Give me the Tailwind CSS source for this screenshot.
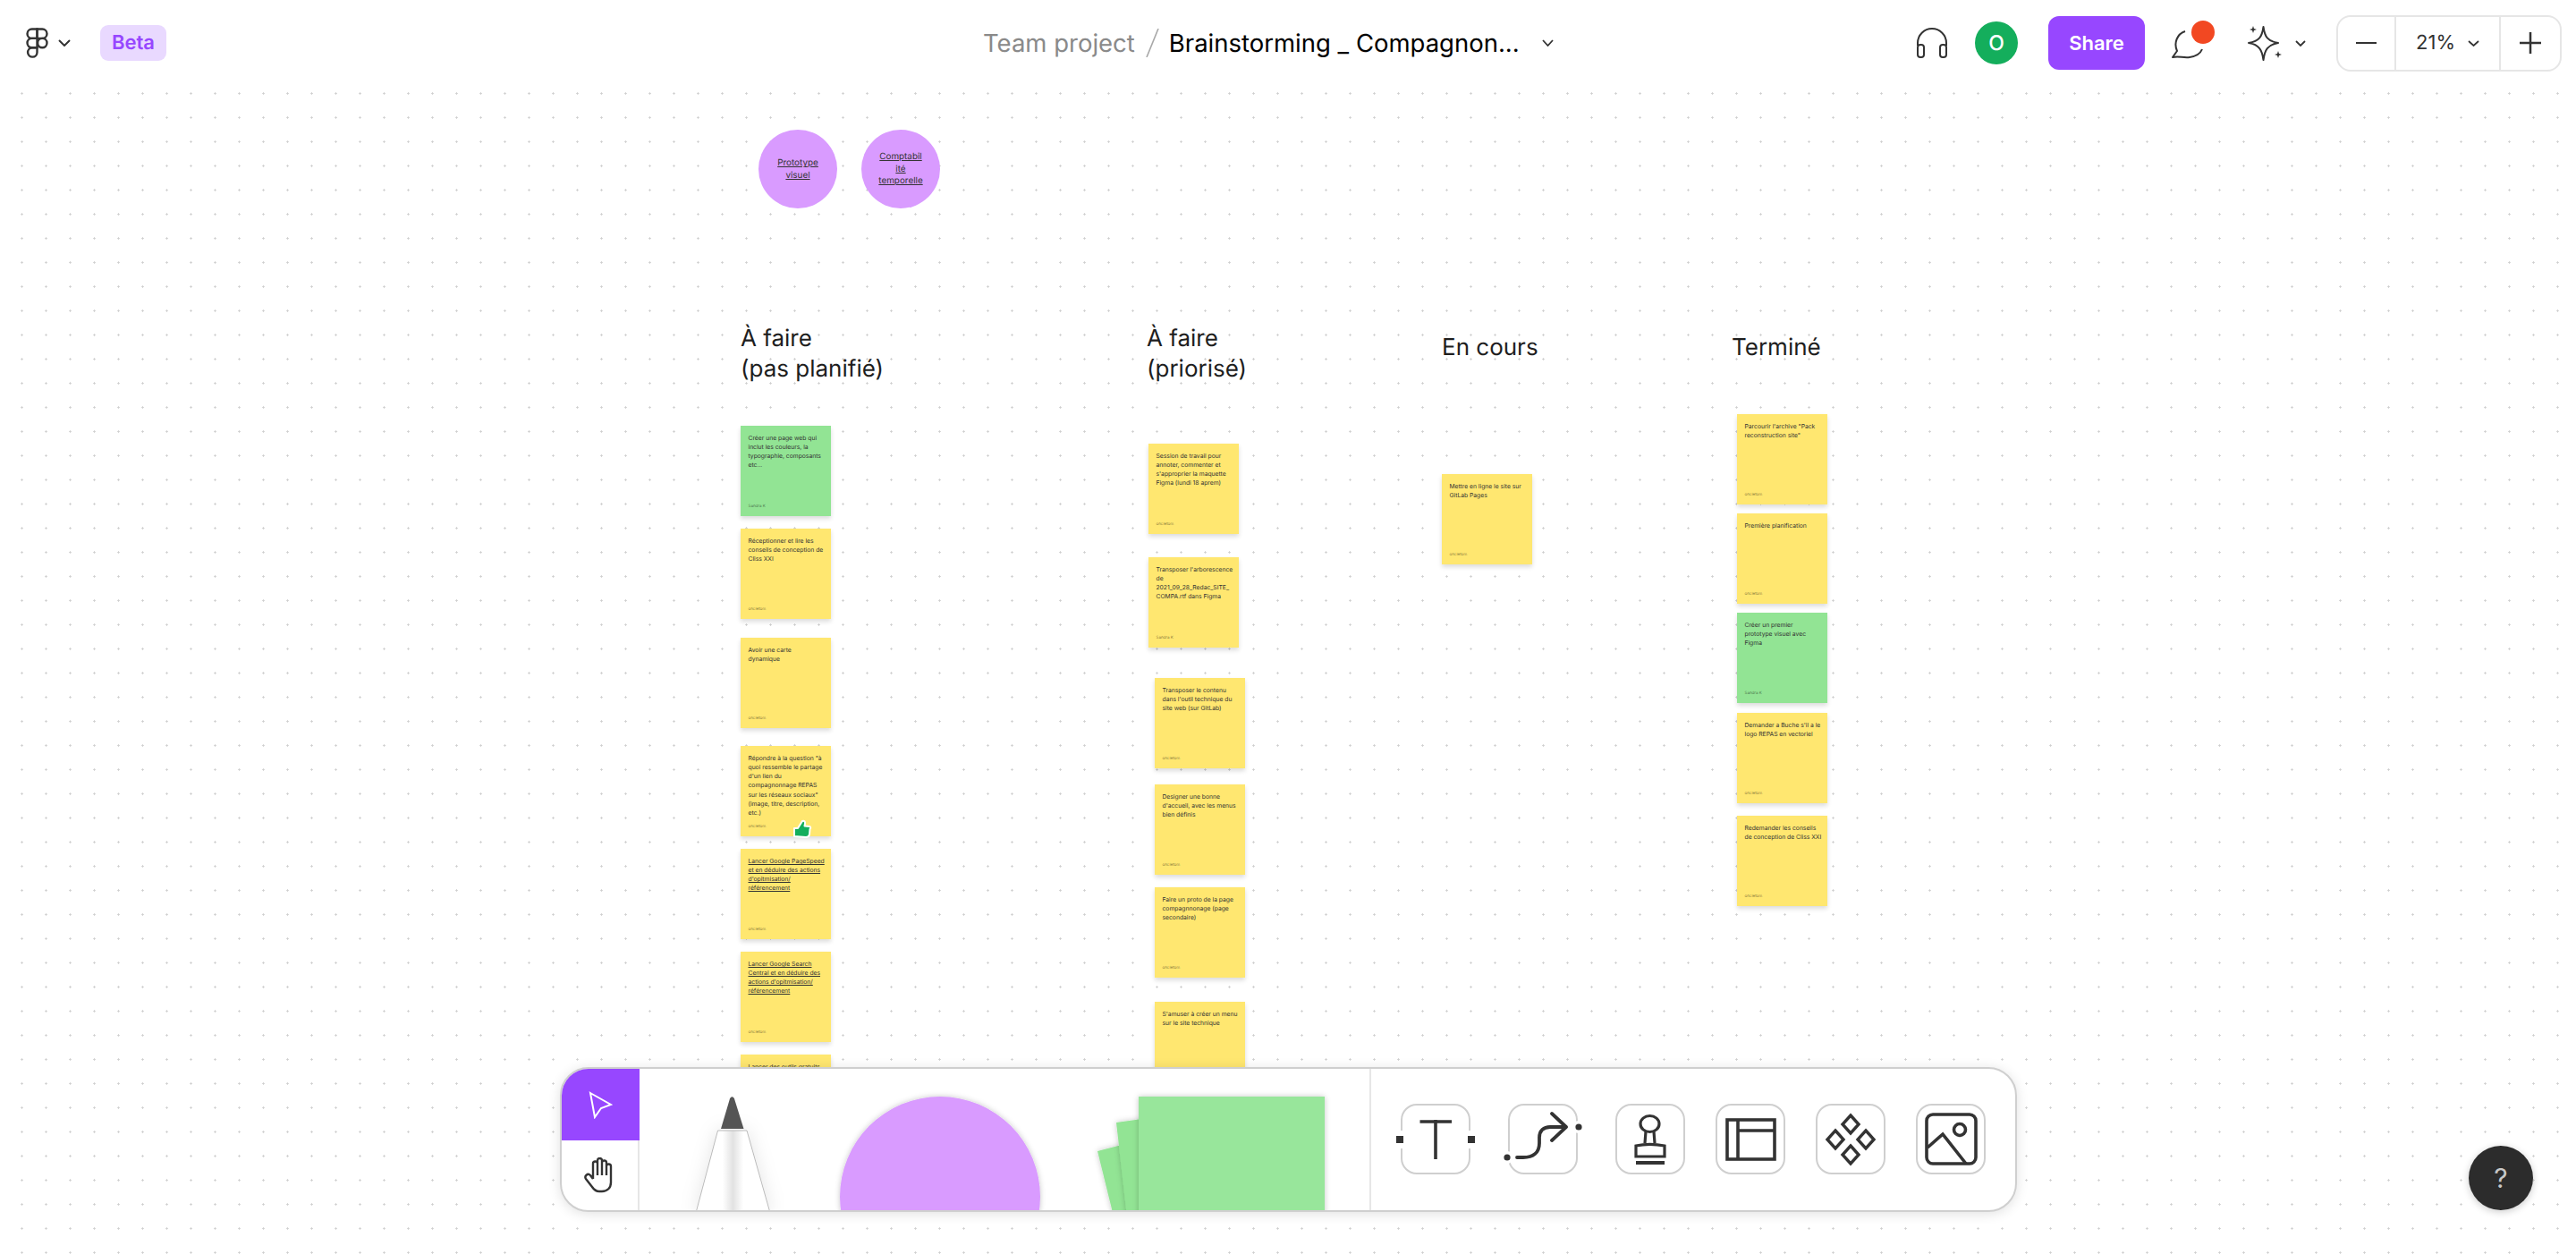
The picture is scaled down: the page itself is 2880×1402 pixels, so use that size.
<!DOCTYPE html>
<html lang="fr">
<head>
    <meta charset="UTF-8">
    <meta name="viewport" content="width=device-width, initial-scale=1.0">
    <title>Brainstorming _ Compagnonnage</title>
    <script src="https://cdn.jsdelivr.net/npm/@tailwindcss/browser@4"></script>
</head>
<body class="bg-white font-['Inter',sans-serif]">
<div class="relative w-full h-[1402px] overflow-hidden">

    <!-- Canvas -->
    <div class="absolute inset-0 bg-white bg-[radial-gradient(circle,#cfcfcf_0.9px,transparent_1.4px)] bg-[size:27px_27px] bg-[position:11px_10px] [text-rendering:geometricPrecision] [font-optical-sizing:none]">

        <!-- Circles -->
        <div class="absolute left-[848px] top-[145px] w-[88px] h-[88px] rounded-full bg-[#d99bff] flex items-center justify-center pt-[2px] text-center text-[9.9px] leading-[13.6px] text-[#333] underline">Prototype<br>visuel</div>
        <div class="absolute left-[963px] top-[145px] w-[88px] h-[88px] rounded-full bg-[#d99bff] flex items-center justify-center pt-[1px] text-center text-[9.9px] leading-[13.6px] text-[#333] underline">Comptabil<br>ité<br>temporelle</div>

        <!-- Column titles -->
        <div class="absolute left-[828px] top-[362px] text-[26px] leading-[34px] text-[#1e1e1e]">À faire<br>(pas planifié)</div>
        <div class="absolute left-[1282px] top-[362px] text-[26px] leading-[34px] text-[#1e1e1e]">À faire<br>(priorisé)</div>
        <div class="absolute left-[1612px] top-[372px] text-[26px] leading-[34px] text-[#1e1e1e]">En cours</div>
        <div class="absolute left-[1936px] top-[372px] text-[26px] leading-[34px] text-[#1e1e1e]">Terminé</div>

        <!-- Stickies: A faire (pas planifie) -->
        <div class="absolute left-[828px] top-[476px] w-[101px] h-[101px] bg-[#92e494] shadow-[0_3px_5px_rgba(0,0,0,0.14)] pl-[8.5px] pt-[9px] whitespace-nowrap text-[6.75px] leading-[10.15px] text-[#333]">Créer une page web qui<br>inclut les couleurs, la<br>typographie, composants<br>etc...<span class="absolute left-[8.5px] bottom-[7.5px] text-[4.5px] leading-[6px] text-black/50">Sandra K</span></div>
        <div class="absolute left-[828px] top-[591px] w-[101px] h-[101px] bg-[#ffe770] shadow-[0_3px_5px_rgba(0,0,0,0.14)] pl-[8.5px] pt-[9px] whitespace-nowrap text-[6.75px] leading-[10.15px] text-[#333]">Réceptionner et lire les<br>conseils de conception de<br>Cliss XXI<span class="absolute left-[8.5px] bottom-[7.5px] text-[4.5px] leading-[6px] text-black/50">oncletom</span></div>
        <div class="absolute left-[828px] top-[713px] w-[101px] h-[101px] bg-[#ffe770] shadow-[0_3px_5px_rgba(0,0,0,0.14)] pl-[8.5px] pt-[9px] whitespace-nowrap text-[6.75px] leading-[10.15px] text-[#333]">Avoir une carte<br>dynamique<span class="absolute left-[8.5px] bottom-[7.5px] text-[4.5px] leading-[6px] text-black/50">oncletom</span></div>
        <div class="absolute left-[828px] top-[834px] w-[101px] h-[101px] bg-[#ffe770] shadow-[0_3px_5px_rgba(0,0,0,0.14)] pl-[8.5px] pt-[9px] whitespace-nowrap text-[6.75px] leading-[10.15px] text-[#333]">Répondre à la question "à<br>quoi ressemble le partage<br>d'un lien du<br>compagnonnage REPAS<br>sur les réseaux sociaux"<br>(image, titre, description,<br>etc.)<span class="absolute left-[8.5px] bottom-[7.5px] text-[4.5px] leading-[6px] text-black/50">oncletom</span></div>
        <div class="absolute left-[828px] top-[949px] w-[101px] h-[101px] bg-[#ffe770] shadow-[0_3px_5px_rgba(0,0,0,0.14)] pl-[8.5px] pt-[9px] whitespace-nowrap text-[6.75px] leading-[10.15px] text-[#333] underline">Lancer Google PageSpeed<br>et en déduire des actions<br>d'opitmisation/<br>référencement<span class="absolute left-[8.5px] bottom-[7.5px] text-[4.5px] leading-[6px] text-black/50 no-underline">oncletom</span></div>
        <div class="absolute left-[828px] top-[1064px] w-[101px] h-[101px] bg-[#ffe770] shadow-[0_3px_5px_rgba(0,0,0,0.14)] pl-[8.5px] pt-[9px] whitespace-nowrap text-[6.75px] leading-[10.15px] text-[#333] underline">Lancer Google Search<br>Central et en déduire des<br>actions d'opitmisation/<br>référencement<span class="absolute left-[8.5px] bottom-[7.5px] text-[4.5px] leading-[6px] text-black/50 no-underline">oncletom</span></div>
        <div class="absolute left-[828px] top-[1179px] w-[101px] h-[101px] bg-[#ffe770] shadow-[0_3px_5px_rgba(0,0,0,0.14)] pl-[8.5px] pt-[9px] whitespace-nowrap text-[6.75px] leading-[10.15px] text-[#333]">Lancer des outils gratuits</div>

        <!-- Thumbs up -->
        <svg class="absolute left-[885px] top-[915px]" width="24" height="24" viewBox="0 0 24 24">
            <path d="M3 11 L7 11 L12 3 C14 2 15.5 3.5 15 6 L14.5 8.5 L20 9 C21.5 9.5 21.5 11 20.5 12 L20 18 C19.5 20 18 21 16 21 L3 20 Z" fill="#14ae5c" stroke="#fff" stroke-width="2" stroke-linejoin="round"/>
        </svg>

        <!-- Stickies: A faire (priorise) -->
        <div class="absolute left-[1284px] top-[496px] w-[101px] h-[101px] bg-[#ffe770] shadow-[0_3px_5px_rgba(0,0,0,0.14)] pl-[8.5px] pt-[9px] whitespace-nowrap text-[6.75px] leading-[10.15px] text-[#333]">Session de travail pour<br>annoter, commenter et<br>s'approprier la maquette<br>Figma (lundi 18 aprem)<span class="absolute left-[8.5px] bottom-[7.5px] text-[4.5px] leading-[6px] text-black/50">oncletom</span></div>
        <div class="absolute left-[1284px] top-[623px] w-[101px] h-[101px] bg-[#ffe770] shadow-[0_3px_5px_rgba(0,0,0,0.14)] pl-[8.5px] pt-[9px] whitespace-nowrap text-[6.75px] leading-[10.15px] text-[#333]">Transposer l'arborescence<br>de<br>2021_09_28_Redac_SITE_<br>COMPA.rtf dans Figma<span class="absolute left-[8.5px] bottom-[7.5px] text-[4.5px] leading-[6px] text-black/50">Sandra K</span></div>
        <div class="absolute left-[1291px] top-[758px] w-[101px] h-[101px] bg-[#ffe770] shadow-[0_3px_5px_rgba(0,0,0,0.14)] pl-[8.5px] pt-[9px] whitespace-nowrap text-[6.75px] leading-[10.15px] text-[#333]">Transposer le contenu<br>dans l'outil technique du<br>site web (sur GitLab)<span class="absolute left-[8.5px] bottom-[7.5px] text-[4.5px] leading-[6px] text-black/50">oncletom</span></div>
        <div class="absolute left-[1291px] top-[877px] w-[101px] h-[101px] bg-[#ffe770] shadow-[0_3px_5px_rgba(0,0,0,0.14)] pl-[8.5px] pt-[9px] whitespace-nowrap text-[6.75px] leading-[10.15px] text-[#333]">Designer une bonne<br>d'accueil, avec les menus<br>bien définis<span class="absolute left-[8.5px] bottom-[7.5px] text-[4.5px] leading-[6px] text-black/50">oncletom</span></div>
        <div class="absolute left-[1291px] top-[992px] w-[101px] h-[101px] bg-[#ffe770] shadow-[0_3px_5px_rgba(0,0,0,0.14)] pl-[8.5px] pt-[9px] whitespace-nowrap text-[6.75px] leading-[10.15px] text-[#333]">Faire un proto de la page<br>compagnnonage (page<br>secondaire)<span class="absolute left-[8.5px] bottom-[7.5px] text-[4.5px] leading-[6px] text-black/50">oncletom</span></div>
        <div class="absolute left-[1291px] top-[1120px] w-[101px] h-[101px] bg-[#ffe770] shadow-[0_3px_5px_rgba(0,0,0,0.14)] pl-[8.5px] pt-[9px] whitespace-nowrap text-[6.75px] leading-[10.15px] text-[#333]">S'amuser à créer un menu<br>sur le site technique</div>

        <!-- Stickies: En cours -->
        <div class="absolute left-[1612px] top-[530px] w-[101px] h-[101px] bg-[#ffe770] shadow-[0_3px_5px_rgba(0,0,0,0.14)] pl-[8.5px] pt-[9px] whitespace-nowrap text-[6.75px] leading-[10.15px] text-[#333]">Mettre en ligne le site sur<br>GitLab Pages<span class="absolute left-[8.5px] bottom-[7.5px] text-[4.5px] leading-[6px] text-black/50">oncletom</span></div>

        <!-- Stickies: Termine -->
        <div class="absolute left-[1942px] top-[463px] w-[101px] h-[101px] bg-[#ffe770] shadow-[0_3px_5px_rgba(0,0,0,0.14)] pl-[8.5px] pt-[9px] whitespace-nowrap text-[6.75px] leading-[10.15px] text-[#333]">Parcourir l'archive "Pack<br>reconstruction site"<span class="absolute left-[8.5px] bottom-[7.5px] text-[4.5px] leading-[6px] text-black/50">oncletom</span></div>
        <div class="absolute left-[1942px] top-[574px] w-[101px] h-[101px] bg-[#ffe770] shadow-[0_3px_5px_rgba(0,0,0,0.14)] pl-[8.5px] pt-[9px] whitespace-nowrap text-[6.75px] leading-[10.15px] text-[#333]">Première planification<span class="absolute left-[8.5px] bottom-[7.5px] text-[4.5px] leading-[6px] text-black/50">oncletom</span></div>
        <div class="absolute left-[1942px] top-[685px] w-[101px] h-[101px] bg-[#92e494] shadow-[0_3px_5px_rgba(0,0,0,0.14)] pl-[8.5px] pt-[9px] whitespace-nowrap text-[6.75px] leading-[10.15px] text-[#333]">Créer un premier<br>prototype visuel avec<br>Figma<span class="absolute left-[8.5px] bottom-[7.5px] text-[4.5px] leading-[6px] text-black/50">Sandra K</span></div>
        <div class="absolute left-[1942px] top-[797px] w-[101px] h-[101px] bg-[#ffe770] shadow-[0_3px_5px_rgba(0,0,0,0.14)] pl-[8.5px] pt-[9px] whitespace-nowrap text-[6.75px] leading-[10.15px] text-[#333]">Demander a Buche s'il a le<br>logo REPAS en vectoriel<span class="absolute left-[8.5px] bottom-[7.5px] text-[4.5px] leading-[6px] text-black/50">oncletom</span></div>
        <div class="absolute left-[1942px] top-[912px] w-[101px] h-[101px] bg-[#ffe770] shadow-[0_3px_5px_rgba(0,0,0,0.14)] pl-[8.5px] pt-[9px] whitespace-nowrap text-[6.75px] leading-[10.15px] text-[#333]">Redemander les conseils<br>de conception de Cliss XXI<span class="absolute left-[8.5px] bottom-[7.5px] text-[4.5px] leading-[6px] text-black/50">oncletom</span></div>
    </div>

    <!-- Header -->
    <header class="relative z-10 h-[96px] bg-white flex items-center pl-[29px] pr-[16px] [text-rendering:geometricPrecision]">
        <svg width="25" height="34" viewBox="-1.5 -1.5 25 34" class="shrink-0" fill="none" stroke="#333" stroke-width="2.4">
            <path d="M11 0 H5.2 a5.2 5.2 0 0 0 0 10.4 H11 Z"/>
            <path d="M11 0 H16.8 a5.2 5.2 0 0 1 0 10.4 H11 Z"/>
            <path d="M11 10.4 H5.2 a5.2 5.2 0 0 0 0 10.4 H11 Z"/>
            <circle cx="16.8" cy="15.6" r="5.2"/>
            <path d="M5.2 20.8 H11 V26 a5.2 5.2 0 1 1 -5.8 -5.2 Z"/>
        </svg>
        <svg class="ml-[11px] shrink-0" width="14" height="8" viewBox="0 0 14 8" fill="none" stroke="#333" stroke-width="2"><path d="M1 1 L7 7 L13 1"/></svg>
        <div class="ml-[33px] w-[74px] h-[40px] rounded-[9px] bg-[#e9d9ff] text-[#9747ff] font-semibold text-[22px] flex items-center justify-center shrink-0">Beta</div>

        <div class="ml-[913px] pt-[2px] text-[27.5px] text-[#8a8a8a] whitespace-nowrap">Team project</div>
        <svg class="ml-[12px] shrink-0" width="15" height="32" viewBox="0 0 15 32" fill="none" stroke="#a8a8a8" stroke-width="1.6"><path d="M1 32 L14 0"/></svg>
        <div class="ml-[11px] pt-[2px] w-[392px] text-[27.5px] text-black whitespace-nowrap">Brainstorming _ Compagnon...</div>
        <svg class="ml-[25px] shrink-0" width="13" height="8" viewBox="0 0 13 8" fill="none" stroke="#333" stroke-width="1.8"><path d="M1 1 L6.5 7 L12 1"/></svg>

        <div class="ml-auto flex items-center">
            <svg width="36" height="36" viewBox="0 0 36 36" fill="none" stroke="#333" stroke-width="2"><path d="M2 21 V18 a16 16 0 0 1 32 0 V21"/><rect x="2" y="20" width="7" height="14" rx="3"/><rect x="27" y="20" width="7" height="14" rx="3"/></svg>
            <div class="ml-[30px] w-[48px] h-[48px] rounded-full bg-[#14ae5c] text-white font-medium text-[23px] flex items-center justify-center">O</div>
            <button class="ml-[34px] w-[108px] h-[60px] rounded-[12px] bg-[#9747ff] text-white font-semibold text-[22px]">Share</button>
            <div class="relative ml-[30px] w-[48px] h-[50px]">
                <svg class="absolute left-0 top-[11px]" width="36" height="32" viewBox="0 0 36 32" fill="none" stroke="#333" stroke-width="2" stroke-linejoin="round"><path d="M15 1 C6 4 2 14 6 23 L1 30 C8 28 12 31 20 30 C27 29 32 26 34 21"/></svg>
                <div class="absolute left-[22px] top-0 w-[26px] h-[26px] rounded-full bg-[#f24822]"></div>
            </div>
            <svg class="ml-[35px]" width="42" height="42" viewBox="0 0 42 42" fill="none" stroke="#333" stroke-width="2" stroke-linejoin="round">
                <path d="M19.5 3 C21 14 24 19 36 21 C24 23 21 29 19.5 40 C18 29 15 23 3 21 C15 19 18 14 19.5 3 Z"/>
                <path d="M8 2 L9 5 L12 6 L9 7 L8 10 L7 7 L4 6 L7 5 Z M36 30 L37 33 L40 34 L37 35 L36 38 L35 35 L32 34 L35 33 Z" fill="#333" stroke="none"/>
            </svg>
            <svg class="ml-[13px]" width="12" height="7" viewBox="0 0 12 7" fill="none" stroke="#333" stroke-width="1.8"><path d="M1 1 L6 6 L11 1"/></svg>
            <div class="ml-[34px] w-[252px] h-[63px] rounded-[16px] border-2 border-[#e6e6e6] flex items-stretch">
                <div class="w-[65px] flex items-center justify-center border-r-2 border-[#e6e6e6]"><div class="w-[23px] h-[2.5px] bg-[#333]"></div></div>
                <div class="w-[117px] flex items-center justify-center border-r-2 border-[#e6e6e6] text-[#333] text-[22px]">21%<svg class="ml-[14px]" width="13" height="7" viewBox="0 0 13 7" fill="none" stroke="#333" stroke-width="1.8"><path d="M1 1 L6.5 6 L12 1"/></svg></div>
                <div class="flex-1 flex items-center justify-center"><svg width="24" height="24" viewBox="0 0 24 24" stroke="#333" stroke-width="2.5"><path d="M0 12 H24 M12 0 V24"/></svg></div>
            </div>
        </div>
    </header>

    <!-- Bottom toolbar -->
    <div class="absolute z-10 left-[626px] top-[1193px] w-[1629px] h-[162px] rounded-[32px] border-2 border-[#cfcfcf] bg-white shadow-[0_2px_14px_rgba(0,0,0,0.12)] overflow-hidden flex">
        <div class="w-[87px] shrink-0 border-r-2 border-[#e6e6e6] flex flex-col">
            <div class="h-[80px] -mr-[2px] bg-[#9747ff] flex items-center justify-center">
                <svg width="27" height="31" viewBox="0 0 27 31" fill="none" stroke="#fff" stroke-width="2"><path d="M2 2 L25 15 L14 19 L7 29 Z"/></svg>
            </div>
            <div class="flex-1 flex items-center justify-center">
                <svg width="35" height="40" viewBox="0 0 35 40" fill="none" stroke="#333" stroke-width="2.4" stroke-linejoin="round"><path d="M10 24 V7 a2.5 2.5 0 0 1 5 0 V3.5 a2.5 2.5 0 0 1 5 0 V6 a2.5 2.5 0 0 1 5 0 V10 a2.5 2.5 0 0 1 5 0 V28 c0 6 -4 10 -10 10 h-3 c-4 0 -6 -2 -8 -5 L2 24 c-2 -3 2 -7 5 -4 L10 24 M15 7 V20 M20 4 V20 M25 7 V20"/></svg>
            </div>
        </div>

        <!-- Pen, shape and sticky tools, in page coordinates -->
        <svg class="w-[816px] h-[158px] shrink-0" viewBox="715 1195 816 158">
            <defs>
                <linearGradient id="penBody" x1="0" x2="1" y1="0" y2="0">
                    <stop offset="0.36" stop-color="#fff"/>
                    <stop offset="0.5" stop-color="#e2e2e2"/>
                    <stop offset="0.64" stop-color="#fff"/>
                </linearGradient>
                <filter id="soft" x="-20%" y="-20%" width="140%" height="140%"><feDropShadow dx="0" dy="0" stdDeviation="3" flood-color="#000" flood-opacity="0.22"/></filter>
                <filter id="wide" x="-60%" y="-20%" width="220%" height="140%"><feDropShadow dx="0" dy="0" stdDeviation="10" flood-color="#000" flood-opacity="0.1"/></filter>
            </defs>
            <path d="M802.5 1264 L778 1356 H861 L835 1264 Z" fill="url(#penBody)" stroke="#aaa" stroke-width="0.8" filter="url(#wide)"/>
            <path d="M815.5 1230 C816.5 1225 820.5 1225 821.5 1230 L831.5 1262 H806 Z" fill="#555"/>
            <circle cx="1051" cy="1338" r="112" fill="#d99bff" filter="url(#soft)"/>
            <polygon points="1227,1287 1281,1273 1300,1360 1245,1360" fill="#92e494" filter="url(#soft)"/>
            <polygon points="1248,1255 1290,1249 1300,1360 1260,1360" fill="#92e494" filter="url(#soft)"/>
            <rect x="1273" y="1226" width="208" height="140" fill="#98e69b" filter="url(#soft)"/>
        </svg>

        <div class="flex-1 border-l-2 border-[#e6e6e6] flex items-center pl-[33px] pb-[2px]">
            <div class="relative w-[78px] h-[79px] rounded-[18px] border-2 border-[#cfcfcf]">
                <svg class="absolute -left-[2px] -top-[2px] overflow-visible" width="78" height="79" viewBox="0 0 78 79">
                    <rect x="-6" y="30" width="10" height="20" fill="#fff"/><rect x="74" y="30" width="10" height="20" fill="#fff"/>
                    <rect x="-5" y="36" width="8" height="8" fill="#333"/><rect x="75" y="36" width="8" height="8" fill="#333"/>
                    <path d="M21.5 20 H57 M39 18 V62" fill="none" stroke="#333" stroke-width="3.6"/>
                </svg>
            </div>
            <div class="relative ml-[42px] w-[78px] h-[79px] rounded-[18px] border-2 border-[#cfcfcf]">
                <svg class="absolute -left-[2px] -top-[2px] overflow-visible" width="78" height="79" viewBox="0 0 78 79">
                    <circle cx="-1" cy="60" r="7" fill="#fff"/><circle cx="79" cy="26" r="7" fill="#fff"/>
                    <circle cx="-1" cy="60" r="3.6" fill="#333"/><circle cx="79" cy="26" r="3.6" fill="#333"/>
                    <path d="M10 60 H17 C28 60 35 55 35 44 V38 C35 30 40 26 47 26 H65 M49 11 L65 26 L49 41" fill="none" stroke="#333" stroke-width="3.8" stroke-linecap="round" stroke-linejoin="round"/>
                </svg>
            </div>
            <div class="relative ml-[42px] w-[78px] h-[79px] rounded-[18px] border-2 border-[#cfcfcf]">
                <svg class="absolute -left-[2px] -top-[2px]" width="78" height="79" viewBox="0 0 78 79" fill="none" stroke="#333" stroke-width="3.2">
                    <ellipse cx="38.5" cy="22.5" rx="10.5" ry="9"/>
                    <path d="M34 31 L33 44 M43 31 L44 44"/>
                    <path d="M23 47 C32 45 45 45 55 47 V59 H23 Z"/>
                    <path d="M23 66 H55" stroke-width="4"/>
                </svg>
            </div>
            <div class="relative ml-[34px] w-[78px] h-[79px] rounded-[18px] border-2 border-[#cfcfcf]">
                <svg class="absolute -left-[2px] -top-[2px]" width="78" height="79" viewBox="0 0 78 79" fill="none" stroke="#333" stroke-width="3.6">
                    <rect x="13" y="18" width="53" height="44"/>
                    <path d="M25 18 V62 M25 30 H66"/>
                </svg>
            </div>
            <div class="relative ml-[34px] w-[78px] h-[79px] rounded-[18px] border-2 border-[#cfcfcf]">
                <svg class="absolute -left-[2px] -top-[2px]" width="78" height="79" viewBox="0 0 78 79" fill="none" stroke="#333" stroke-width="3.4">
                    <polygon points="39,13 48,23 39,33 30,23"/>
                    <polygon points="22,30 31,40 22,50 13,40"/>
                    <polygon points="56,30 65,40 56,50 47,40"/>
                    <polygon points="39,47 48,57 39,67 30,57"/>
                </svg>
            </div>
            <div class="relative ml-[34px] w-[78px] h-[79px] rounded-[18px] border-2 border-[#cfcfcf]">
                <svg class="absolute -left-[2px] -top-[2px]" width="78" height="79" viewBox="0 0 78 79" fill="none" stroke="#333" stroke-width="3.6">
                    <rect x="12" y="12" width="55" height="55" rx="7"/>
                    <circle cx="49" cy="29" r="6.5"/>
                    <path d="M13 49 L30 34 L56 67"/>
                </svg>
            </div>
        </div>
    </div>

    <!-- Help -->
    <div class="absolute z-10 left-[2760px] top-[1281px] w-[72px] h-[72px] rounded-full bg-[#2c2c2c] shadow-[0_2px_8px_rgba(0,0,0,0.2)] flex items-center justify-center text-[#c8c8c8] text-[30px]">?</div>
</div>
</body>
</html>
